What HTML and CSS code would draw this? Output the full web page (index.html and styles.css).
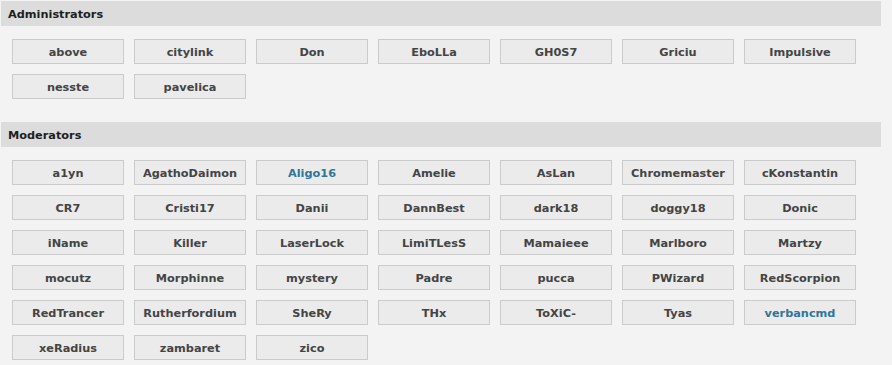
FILE: index.html
```html
<!DOCTYPE html>
<html>
<head>
<meta charset="utf-8">
<link rel="stylesheet" href="styles.css">
</head>
<body>
<div class="page">
  <section class="group">
    <h2 class="group-title">Administrators</h2>
    <div class="grid">
      <a class="user">above</a>
      <a class="user">citylink</a>
      <a class="user">Don</a>
      <a class="user">EboLLa</a>
      <a class="user">GH0S7</a>
      <a class="user">Griciu</a>
      <a class="user">Impulsive</a>
      <a class="user">nesste</a>
      <a class="user">pavelica</a>
    </div>
  </section>
  <section class="group">
    <h2 class="group-title">Moderators</h2>
    <div class="grid">
      <a class="user">a1yn</a>
      <a class="user">AgathoDaimon</a>
      <a class="user blue">Aligo16</a>
      <a class="user">Amelie</a>
      <a class="user">AsLan</a>
      <a class="user">Chromemaster</a>
      <a class="user">cKonstantin</a>
      <a class="user">CR7</a>
      <a class="user">Cristi17</a>
      <a class="user">Danii</a>
      <a class="user">DannBest</a>
      <a class="user">dark18</a>
      <a class="user">doggy18</a>
      <a class="user">Donic</a>
      <a class="user">iName</a>
      <a class="user">Killer</a>
      <a class="user">LaserLock</a>
      <a class="user">LimiTLesS</a>
      <a class="user">Mamaieee</a>
      <a class="user">Marlboro</a>
      <a class="user">Martzy</a>
      <a class="user">mocutz</a>
      <a class="user">Morphinne</a>
      <a class="user">mystery</a>
      <a class="user">Padre</a>
      <a class="user">pucca</a>
      <a class="user">PWizard</a>
      <a class="user">RedScorpion</a>
      <a class="user">RedTrancer</a>
      <a class="user">Rutherfordium</a>
      <a class="user">SheRy</a>
      <a class="user">THx</a>
      <a class="user">ToXiC-</a>
      <a class="user">Tyas</a>
      <a class="user blue">verbancmd</a>
      <a class="user">xeRadius</a>
      <a class="user">zambaret</a>
      <a class="user">zico</a>
    </div>
  </section>
</div>
</body>
</html>
```

FILE: styles.css
```css
html, body {
  margin: 0;
  padding: 0;
  background: #f3f3f3;
}
body {
  font-family: "DejaVu Sans", Verdana, sans-serif;
  font-size: 11.3px;
  font-weight: bold;
  color: #444;
}
.page {
  padding: 1px 11px 0 1px;
  display: flex;
  flex-direction: column;
  gap: 23px;
}
.group-title {
  margin: 0;
  height: 24px;
  padding: 1px 0 0 7px;
  line-height: 25px;
  background: #dcdcdc;
  color: #1e1e1e;
  font-size: 11.3px;
  font-weight: bold;
}
.grid {
  display: grid;
  grid-template-columns: repeat(7, 112px);
  column-gap: 10px;
  row-gap: 10px;
  padding: 13px 0 0 11px;
}
.user {
  box-sizing: border-box;
  height: 25px;
  padding-top: 1px;
  line-height: 23px;
  text-align: center;
  background: #ebebeb;
  border: 1px solid #cbcbcb;
  color: #444;
}
.user.blue {
  color: #2f7699;
}
```
